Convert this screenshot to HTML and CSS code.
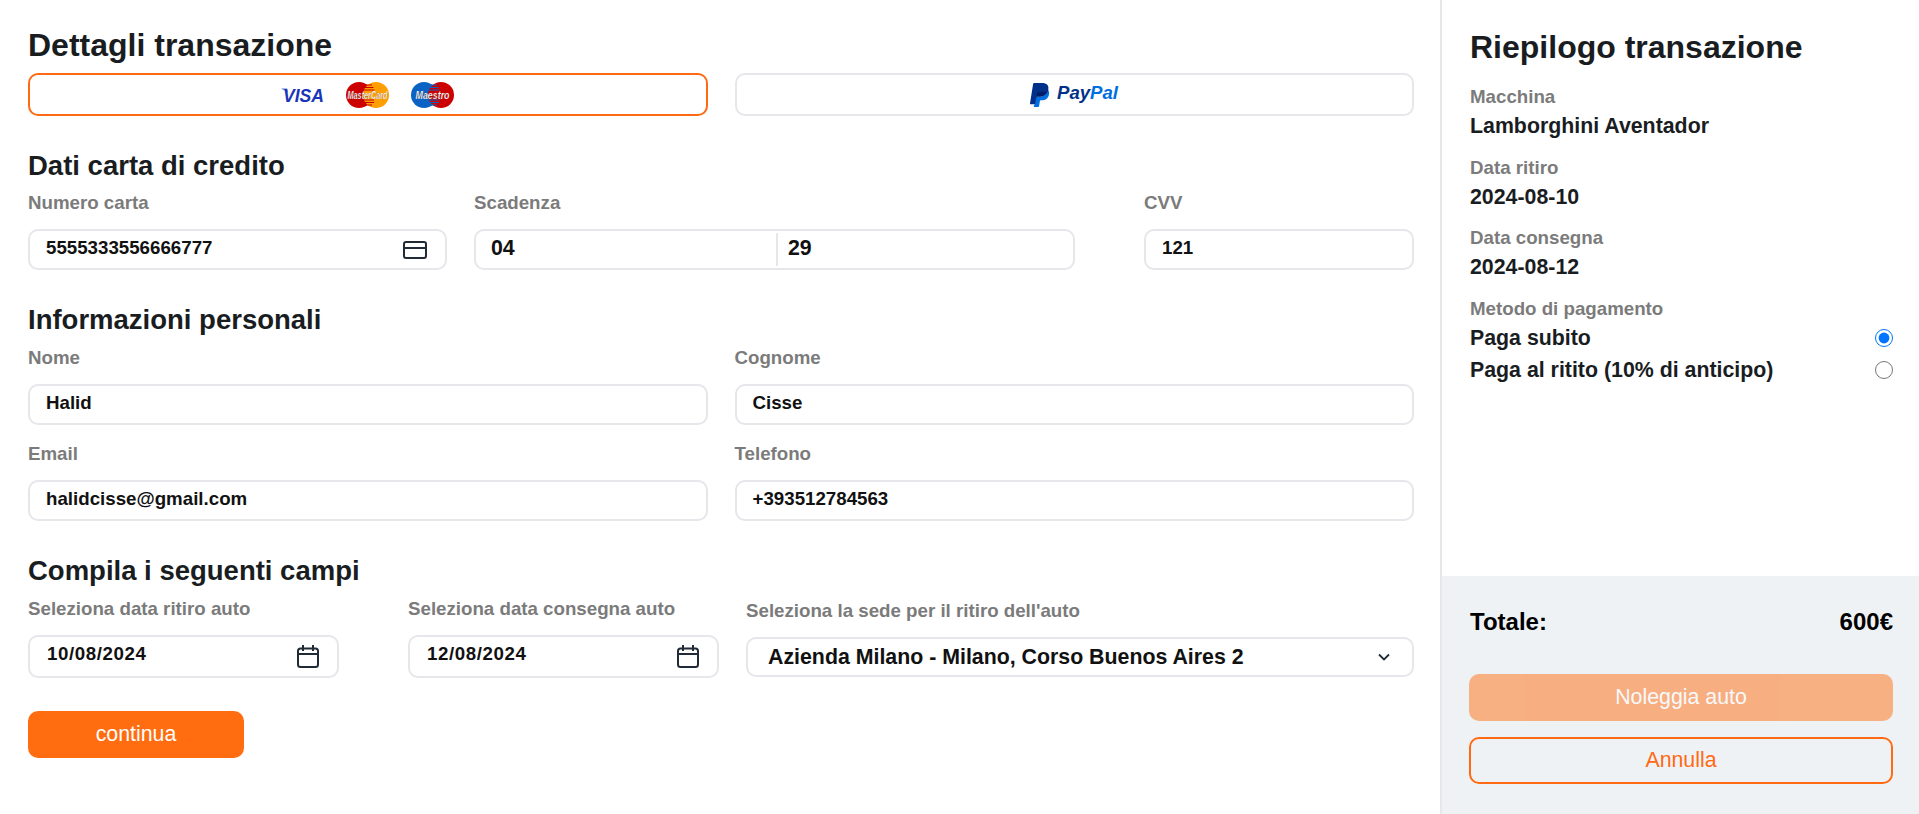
FILE: index.html
```html
<!doctype html>
<html lang="it">
  <head>
    <meta charset="utf-8">
    <title>Dettagli transazione</title>
    <link rel="stylesheet" href="styles.css">
  </head>
  <body>
    <div class="page">
      <main class="details">
        <h1 class="title">Dettagli transazione</h1>
        <div class="row">
          <button class="method method-active" type="button">
            <svg class="logo" width="43" height="26" viewBox="0 0 43 26">
              <path d="M0 6.5h6l1 4z" fill="#5f78d8"/>
              <text x="2" y="20" class="visa-text" textLength="41" lengthAdjust="spacingAndGlyphs">VISA</text>
            </svg>
            <svg class="logo" width="43" height="26" viewBox="0 0 43 26">
              <circle cx="13" cy="13" r="13" fill="#cc0000"/>
              <circle cx="30" cy="13" r="13" fill="#ff9e00"/>
              <path d="M17 3h9M15.500 5.500h12M14.500 8h14M14 20.500h14M15 18h13M17 23h9" stroke="#cc0000" stroke-width="1.200"/>
              <text x="21.500" y="17" class="badge-text" text-anchor="middle" textLength="40" lengthAdjust="spacingAndGlyphs">MasterCard</text>
            </svg>
            <svg class="logo" width="43" height="26" viewBox="0 0 43 26">
              <circle cx="13" cy="13" r="13" fill="#0a63c4"/>
              <circle cx="30" cy="13" r="13" fill="#cc0000"/>
              <path d="M17 3h9M15.500 5.500h12M14.500 8h14M14 20.500h14M15 18h13M17 23h9" stroke="#0a63c4" stroke-width="1.200"/>
              <text x="21.500" y="17" class="badge-text" text-anchor="middle" textLength="34" lengthAdjust="spacingAndGlyphs">Maestro</text>
            </svg>
          </button>
          <button class="method" type="button">
            <svg class="logo" width="20" height="24" viewBox="0 0 20 24">
              <path fill="#0070e0" d="M18.700 6.900c-.3-.3-.6-.5-1-.7-.9 4.900-4 7.500-9.200 7.500H6.300c-.3 0-.5.200-.6.500L4.500 22H4l-.2 1.400c0 .3.200.6.500.6h3.900c.5 0 .9-.3.900-.8.100-.3.800-4.900.8-5.100.1-.5.500-.8 1-.8h.5c3.800 0 6.700-1.500 7.600-5.900.3-1.900.1-3.400-.8-4.500z"/>
              <path fill="#003087" d="M5.100 21.300H.6c-.4 0-.7-.3-.6-.7L3.100.9C3.200.4 3.600 0 4.100 0h7.500c2.600 0 4.600.5 5.700 1.800 1 1.200 1.300 2.400 1 4.300 0 .1 0 .3-.1.400-1 5.100-4.300 6.800-8.600 6.800H7.400c-.5 0-1 .4-1 .9z"/>
              <path fill="#001c64" d="M17.700 6.200c-.9 4.900-4 7.500-9.200 7.500H6.400L7 9.900c.1-.5.500-.9 1-.9h7c1 0 1.900-.1 2.700-.3.100-.8.100-1.600 0-2.500z"/>
            </svg>
            <svg class="logo" width="62" height="20" viewBox="0 0 62 20">
              <text x="0" y="14" class="pay-text" textLength="61" lengthAdjust="spacingAndGlyphs"><tspan fill="#003087">Pay</tspan><tspan fill="#0070e0">Pal</tspan></text>
            </svg>
          </button>
        </div>

        <h2 class="subtitle">Dati carta di credito</h2>
        <div class="row">
          <div class="field">
            <label class="label">Numero carta</label>
            <div class="box">
              <input class="input" value="5555333556666777">
              <svg class="icon" width="24" height="18" viewBox="0 0 24 18">
                <rect x="1" y="1" width="22" height="16" rx="2" fill="none" stroke="#212b36" stroke-width="2"/>
                <path d="M1 7h22" stroke="#212b36" stroke-width="2"/>
              </svg>
            </div>
          </div>
          <div class="row-wide">
            <div class="field">
              <label class="label">Scadenza</label>
              <div class="box">
                <input class="input input-big input-month" value="04">
                <input class="input input-big input-year" value="29">
              </div>
            </div>
            <div class="field">
              <label class="label">CVV</label>
              <div class="box">
                <input class="input" value="121">
              </div>
            </div>
          </div>
        </div>

        <h2 class="subtitle subtitle-next">Informazioni personali</h2>
        <div class="row row-stack">
          <div class="field">
            <label class="label">Nome</label>
            <div class="box"><input class="input" value="Halid"></div>
          </div>
          <div class="field">
            <label class="label">Cognome</label>
            <div class="box"><input class="input" value="Cisse"></div>
          </div>
          <div class="field">
            <label class="label">Email</label>
            <div class="box"><input class="input" value="halidcisse@gmail.com"></div>
          </div>
          <div class="field">
            <label class="label">Telefono</label>
            <div class="box"><input class="input" value="+393512784563"></div>
          </div>
        </div>

        <h2 class="subtitle subtitle-next">Compila i seguenti campi</h2>
        <div class="row">
          <div class="row-wide">
            <div class="field">
              <label class="label">Seleziona data ritiro auto</label>
              <div class="box box-date">
                <input class="input input-date" value="10/08/2024">
                <svg class="icon" width="22" height="23" viewBox="0 0 22 23">
                  <rect x="1" y="3.500" width="20" height="18.500" rx="2.500" fill="none" stroke="#212b36" stroke-width="2"/>
                  <path d="M1 9h20M6 0v6M16 0v6" stroke="#212b36" stroke-width="2"/>
                </svg>
              </div>
            </div>
            <div class="field">
              <label class="label">Seleziona data consegna auto</label>
              <div class="box box-date">
                <input class="input input-date" value="12/08/2024">
                <svg class="icon" width="22" height="23" viewBox="0 0 22 23">
                  <rect x="1" y="3.500" width="20" height="18.500" rx="2.500" fill="none" stroke="#212b36" stroke-width="2"/>
                  <path d="M1 9h20M6 0v6M16 0v6" stroke="#212b36" stroke-width="2"/>
                </svg>
              </div>
            </div>
          </div>
          <div class="field field-select">
            <label class="label">Seleziona la sede per il ritiro dell'auto</label>
            <div class="box box-select">
              <select class="select">
                <option>Azienda Milano - Milano, Corso Buenos Aires 2</option>
              </select>
              <svg class="chevron" width="12" height="8" viewBox="0 0 12 8">
                <path d="M1 1.500l5 5 5-5" fill="none" stroke="#212b36" stroke-width="1.800"/>
              </svg>
            </div>
          </div>
        </div>

        <button class="btn btn-continue" type="button">continua</button>
      </main>

      <aside class="summary">
        <div class="summary-top">
          <h1 class="title summary-title">Riepilogo transazione</h1>
          <div class="item">
            <div class="label item-label">Macchina</div>
            <div class="value">Lamborghini Aventador</div>
          </div>
          <div class="item">
            <div class="label item-label">Data ritiro</div>
            <div class="value">2024-08-10</div>
          </div>
          <div class="item">
            <div class="label item-label">Data consegna</div>
            <div class="value">2024-08-12</div>
          </div>
          <div class="label item-label">Metodo di pagamento</div>
          <label class="pay-option">
            <span class="value">Paga subito</span>
            <input class="radio" type="radio" name="pay" checked>
          </label>
          <label class="pay-option">
            <span class="value">Paga al ritito (10% di anticipo)</span>
            <input class="radio" type="radio" name="pay">
          </label>
        </div>
        <div class="summary-bottom">
          <div class="total">
            <span>Totale:</span>
            <span>600€</span>
          </div>
          <button class="btn btn-rent" type="button" disabled>Noleggia auto</button>
          <button class="btn btn-cancel" type="button">Annulla</button>
        </div>
      </aside>
    </div>
  </body>
</html>
```

FILE: styles.css
```css
* { box-sizing: border-box; }

body {
  margin: 0;
  font-family: "Liberation Sans", Arial, sans-serif;
  color: #1a1d1f;
  background: white;
}

.page { display: flex; min-height: 100vh; }

/* left column */
.details { width: 1440px; padding: 27px 26px 0 28px; }

.title { margin: 0 0 9px; font-size: 32px; line-height: 37px; font-weight: 700; }

.subtitle { margin: 34px 0 10px; font-size: 27.500px; line-height: 32px; font-weight: 700; }
.subtitle-next { margin-bottom: 11px; }

.row { display: grid; grid-template-columns: 1fr 1fr; column-gap: 27px; }
.row-stack { row-gap: 18px; }
.row-wide { display: grid; grid-template-columns: 1fr 1fr; column-gap: 69px; }

.label {
  display: block;
  margin-bottom: 15px;
  font-size: 18.720px;
  line-height: 22px;
  font-weight: 700;
  color: #7b7b7b;
}

.method {
  display: flex;
  align-items: center;
  justify-content: center;
  gap: 22px;
  height: 43px;
  padding: 0;
  background: white;
  border: 2px solid #e6e6eb;
  border-radius: 10px;
}
.method + .method { gap: 7px; }
.method-active { border-color: #ff6a13; }

.logo { display: block; }
.visa-text { font: italic 700 19px "Liberation Sans", sans-serif; fill: #1a36b8; }
.badge-text { font: italic 700 11px "Liberation Sans", sans-serif; fill: white; stroke: #4a2a20; stroke-width: .2px; }
.pay-text { font: italic 700 17.500px "Liberation Sans", sans-serif; }

.box {
  display: flex;
  align-items: center;
  height: 41px;
  background: white;
  border: 2px solid #e6e6eb;
  border-radius: 10px;
}
.box-date { height: 43px; }
.box-select { height: 40px; padding-right: 22px; }

.input {
  flex: 1;
  min-width: 0;
  height: 100%;
  padding: 0 0 3px 16px;
  border: 0;
  outline: 0;
  background: none;
  font-family: inherit;
  font-size: 18.720px;
  font-weight: 700;
  color: #111;
}
.input-big { font-size: 21.330px; }
.input-month { height: 33px; padding-left: 15px; border-right: 2px solid #e6e6eb; }
.input-year { height: 33px; padding-left: 10px; }
.input-date { padding-left: 17px; padding-bottom: 5px; letter-spacing: .6px; }

.icon { flex: none; margin-right: 18px; }

.field-select { margin-top: 2px; }

.select {
  flex: 1;
  height: 100%;
  padding: 0 0 0 20px;
  border: 0;
  outline: 0;
  background: none;
  appearance: none;
  font-family: inherit;
  font-size: 21.330px;
  font-weight: 700;
  color: #111;
}
.chevron { flex: none; }

.btn {
  display: block;
  height: 47px;
  padding: 0;
  border: 0;
  border-radius: 10px;
  font-family: inherit;
  font-size: 21.330px;
  color: white;
}
.btn-continue { width: 216px; margin-top: 33px; background: #ff6d10; }

/* right column */
.summary {
  display: flex;
  flex-direction: column;
  flex: 1;
  border-left: 2px solid #e6e6eb;
}
.summary-top { flex: 1; padding: 29px 26px 0 28px; }
.summary-title { margin-bottom: 20px; }

.item { margin-bottom: 17.500px; }
.item-label { margin-bottom: 6px; }

.value { font-size: 21.330px; line-height: 25px; font-weight: 700; }

.pay-option {
  display: flex;
  align-items: center;
  justify-content: space-between;
  margin-bottom: 7px;
}
.radio { width: 18px; height: 18px; margin: 0; }

.summary-bottom {
  height: 238px;
  padding: 32px 26px 0 27px;
  background: #eff2f5;
}
.total {
  display: flex;
  justify-content: space-between;
  padding-left: 1px;
  font-size: 24px;
  line-height: 28px;
  font-weight: 700;
  color: black;
}
.btn-rent { width: 100%; margin-top: 38px; background: #ff6d10; opacity: .5; }
.btn-cancel {
  width: 100%;
  margin-top: 16px;
  background: none;
  border: 2px solid #ff6a13;
  color: #ff6a13;
}
```
